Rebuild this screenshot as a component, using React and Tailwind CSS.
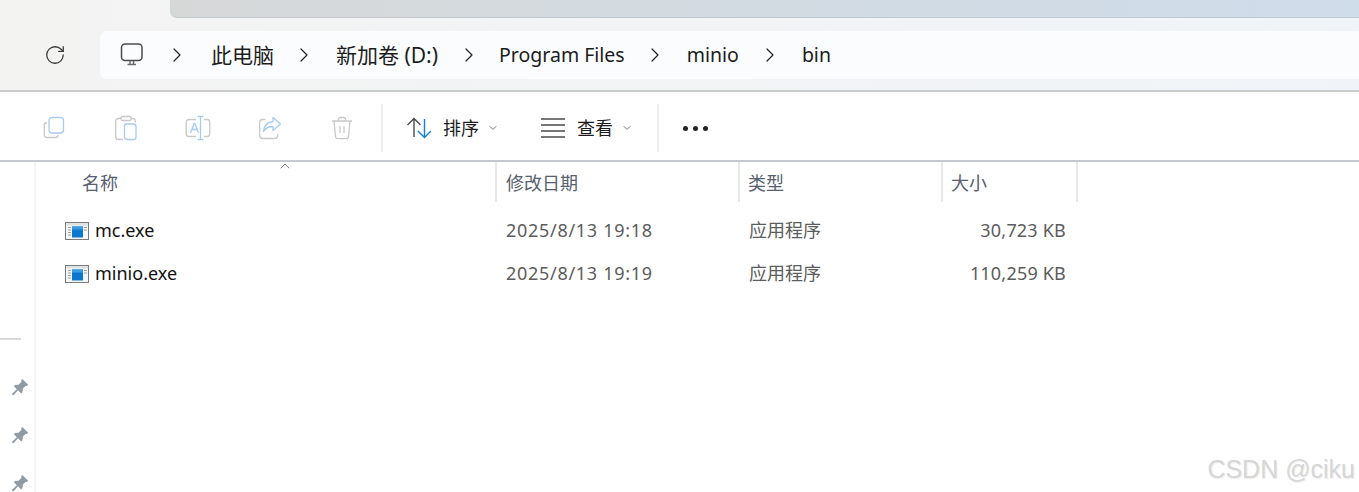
import React from 'react';
import { RotateCw, ChevronRight, ChevronDown, ChevronUp } from 'lucide-react';

const FONT = "font-['Noto_Sans','Noto_Sans_CJK_SC',sans-serif]";

const MonitorIcon = () => (
  <svg width="24" height="24" viewBox="0 0 24 24" fill="none" stroke="#4a4a4a" strokeWidth="1.5">
    <rect x="1.5" y="1" width="20.5" height="16.5" rx="3.5" />
    <path d="M7.5 21.5h8.5M10 18v3M13.5 18v3" stroke="#6b6b6b" />
  </svg>
);

const CopyIcon = () => (
  <svg width="24" height="24" viewBox="0 0 24 24" fill="none" strokeWidth="1.3">
    <path d="M5 6.5c-1.6.3-2.7 1.3-2.7 3v8.700c0 2 1.300 3.300 3.300 3.300h7.700c1.800 0 2.800-1 3.100-2.500" stroke="#c9c9c9" />
    <rect x="7" y="1.500" width="14.500" height="15.500" rx="3" stroke="#a5cdf0" />
  </svg>
);

const PasteIcon = () => (
  <svg width="24" height="26" viewBox="0 0 24 26" fill="none" strokeWidth="1.3">
    <path d="M7 3.500H4.500C2.800 3.500 1.700 4.600 1.700 6.300v15.400c0 1.700 1.100 2.800 2.800 2.800H9M17 3.500h1.500c1.700 0 2.800 1.100 2.800 2.800V7.500" stroke="#c9c9c9" />
    <rect x="7" y="1.500" width="10" height="4" rx="1.500" stroke="#c9c9c9" />
    <rect x="10.500" y="9" width="11.500" height="15.500" rx="2.500" stroke="#a5cdf0" />
  </svg>
);

const RenameIcon = () => (
  <svg width="26" height="26" viewBox="0 0 26 26" fill="none" strokeWidth="1.3">
    <path d="M11 4.500H4C2.300 4.500 1.200 5.600 1.200 7.300v11.400c0 1.700 1.100 2.800 2.800 2.800h7M19 4.500h3c1.700 0 2.800 1.100 2.800 2.800v11.400c0 1.700-1.100 2.800-2.800 2.800h-3" stroke="#c9c9c9" />
    <path d="M5.500 18l3.700-9.500h.6l3.700 9.500M7 14.500h5.500M12.500 1.500h6M12.500 24.500h6M15.500 1.500v23" stroke="#a5cdf0" />
  </svg>
);

const ShareIcon = () => (
  <svg width="24" height="24" viewBox="0 0 24 24" fill="none" strokeWidth="1.3">
    <path d="M7.500 3.500H4.700C2.900 3.500 1.700 4.700 1.700 6.500v13c0 1.800 1.200 3 3 3h12c1.800 0 3-1.200 3-3v-1.500" stroke="#c9c9c9" />
    <path d="M15 1.500l7.500 6.500-7.500 6.500v-4C10.500 10.500 7.500 12 5.500 15.500c.5-5.500 3.500-9.300 9.500-10z" stroke="#a5cdf0" strokeLinejoin="round" />
  </svg>
);

const TrashIcon = () => (
  <svg width="22" height="24" viewBox="0 0 22 24" fill="none" stroke="#c9c9c9" strokeWidth="1.3">
    <path d="M1 5h20M7.500 5V3.500C7.500 2.300 8.300 1.500 9.500 1.500h3c1.200 0 2 .8 2 2V5M3 5l1.500 15.500c.1 1.300 1 2.200 2.300 2.200h8.400c1.300 0 2.200-.9 2.300-2.200L19 5M9 10v7M13 10v7" />
  </svg>
);

const SortIcon = () => (
  <svg width="26" height="22" viewBox="0 0 26 22" fill="none" strokeWidth="1.400">
    <path d="M1.500 8L8 1.500 14.500 8M8 1.500V20" stroke="#4a4a4a" />
    <path d="M12 14l6.500 6.500L25 14M18.500 20.500V2" stroke="#0f7fd6" />
  </svg>
);

const PinIcon = () => (
  <svg width="18" height="18" viewBox="0 0 16 16" fill="#8f9ba3">
    <path d="M9.800.7l5.500 5.200-1.400 1.100-1 .1-2.500 2.500-.2 3-1.200 1.100-2.700-2.800L2 15.500.7 14.300l4.500-4.300L2.500 7.300l1.100-1.100 3.100-.2 2.400-2.500.1-1.100z" />
  </svg>
);

const ExeIcon = () => (
  <svg width="24" height="18" viewBox="0 0 24 18" className="shrink-0">
    <rect x="0.500" y="0.500" width="23" height="17" fill="#f4f6f8" stroke="#7b7b7b" />
    <rect x="1" y="1" width="22" height="2.500" fill="#dfe3e6" />
    <path d="M3 5.500h3M3 8h3M3 10.500h3M3 13h3M19 5.500h3M19 8h3" stroke="#9aa2a8" />
    <rect x="7" y="4.500" width="11" height="11" fill="#0a78cf" />
    <rect x="7" y="4.500" width="11" height="3" fill="#3a9be3" />
  </svg>
);

const Crumb = ({ label, className }) => (
  <span className={`leading-[28px] text-[#1c1c1c] whitespace-nowrap ${className}`}>{label}</span>
);

const Sep = ({ right }) => <ChevronRight size={24} strokeWidth={1.200} className={`text-[#222] shrink-0 ${right}`} />;

const ToolBtn = ({ children, w }) => (
  <div className={`flex items-center justify-center ${w}`}>{children}</div>
);

const files = [
  { name: 'mc.exe', date: '2025/8/13 19:18', type: '应用程序', size: '30,723 KB' },
  { name: 'minio.exe', date: '2025/8/13 19:19', type: '应用程序', size: '110,259 KB' },
];

const Header = ({ label, className }) => (
  <div className={`h-[40px] pt-[2px] flex items-center border-r-2 border-[#e6e8ea] text-[18px] text-[#56606e] ${className}`}>{label}</div>
);

export default function App() {
  return (
    <div className={`w-[1359px] h-[492px] overflow-hidden bg-white flex flex-col relative ${FONT}`}>
      {/* title strip and address bar */}
      <div className="h-[92px] shrink-0 bg-gradient-to-r from-[#f3f3f2] to-[#f0f4f8] border-b-2 border-[#c9ccca]">
        <div className="h-[18px] ml-[170px] bg-gradient-to-r from-[#d6d8d8] via-[#d2dbe2] to-[#cfdcea] rounded-bl-[7px] border-b border-[#c4c8ca]" />
        <div className="mt-[13px] flex items-center">
          <div className="w-[100px] shrink-0 flex justify-center pl-[10px]">
            <RotateCw size={22} strokeWidth={1.400} className="text-[#3a3a3a]" />
          </div>
          <div className="flex-1 h-[48px] bg-[#fbfcfd] rounded-l-[7px] flex items-center pl-[20px]">
            <span className="mr-[21px] flex"><MonitorIcon /></span>
            <Sep right="mr-[22px]" />
            <Crumb label="此电脑" className="text-[21px] mr-[18px]" />
            <Sep right="mr-[20px]" />
            <Crumb label="新加卷 (D:)" className="text-[21px] mr-[19px]" />
            <Sep right="mr-[18px]" />
            <Crumb label="Program Files" className="text-[19.5px] mr-[18px]" />
            <Sep right="mr-[20px]" />
            <Crumb label="minio" className="text-[19.5px] mr-[19px]" />
            <Sep right="mr-[20px]" />
            <Crumb label="bin" className="text-[19.5px]" />
          </div>
        </div>
      </div>

      {/* command bar */}
      <div className="h-[70px] shrink-0 bg-white border-b-2 border-[#c5c9cd] flex items-center pt-[4px]">
        <div className="flex items-center pl-[18px] w-[383px] shrink-0 h-[48px] border-r-2 border-[#eeeeee]">
          <ToolBtn w="w-[72px]"><CopyIcon /></ToolBtn>
          <ToolBtn w="w-[72px]"><PasteIcon /></ToolBtn>
          <ToolBtn w="w-[72px]"><RenameIcon /></ToolBtn>
          <ToolBtn w="w-[72px]"><ShareIcon /></ToolBtn>
          <ToolBtn w="w-[72px]"><TrashIcon /></ToolBtn>
        </div>
        <div className="flex items-center w-[276px] shrink-0 h-[48px] border-r-2 border-[#eeeeee] pl-[23px]">
          <SortIcon />
          <span className="ml-[11px] text-[18px] text-[#1c1c1c]">排序</span>
          <ChevronDown size={12} className="ml-[8px] text-[#777]" />
          <div className="ml-[42px] w-[24px] flex flex-col gap-[4px]">
            <div className="h-[2px] bg-[#777]" />
            <div className="h-[2px] bg-[#777]" />
            <div className="h-[2px] bg-[#777]" />
            <div className="h-[2px] bg-[#777]" />
          </div>
          <span className="ml-[12px] text-[18px] text-[#1c1c1c]">查看</span>
          <ChevronDown size={12} className="ml-[8px] text-[#777]" />
        </div>
        <div className="ml-[24px] flex gap-[5px]">
          <div className="w-[5px] h-[5px] rounded-full bg-[#222]" />
          <div className="w-[5px] h-[5px] rounded-full bg-[#222]" />
          <div className="w-[5px] h-[5px] rounded-full bg-[#222]" />
        </div>
      </div>

      {/* body */}
      <div className="flex-1 flex min-h-0">
        <div className="w-[36px] shrink-0 border-r-2 border-[#f4f4f4] flex flex-col pt-[176px]">
          <div className="w-[21px] h-[2px] bg-[#d9d9d9]" />
          <div className="mt-[38px] ml-[11px] flex flex-col gap-[30px]">
            <PinIcon />
            <PinIcon />
            <PinIcon />
          </div>
        </div>
        <div className="flex-1 min-w-0">
          <div className="flex relative">
            <Header label="名称" className="w-[461px] pl-[46px]" />
            <Header label="修改日期" className="w-[243px] pl-[9px]" />
            <Header label="类型" className="w-[203px] pl-[8px]" />
            <Header label="大小" className="w-[135px] pl-[8px]" />
            <ChevronUp size={16} strokeWidth={1.200} className="absolute left-[241px] top-[-4px] text-[#666]" />
          </div>
          <div className="mt-[7px] flex flex-col">
            {files.map((f) => (
              <div key={f.name} className="h-[43px] flex items-center text-[18px]">
                <div className="w-[461px] pl-[29px] flex items-center gap-[6px] text-[#111]">
                  <ExeIcon />
                  <span>{f.name}</span>
                </div>
                <div className="w-[243px] pl-[9px] text-[#5c5c5c] tracking-[0.7px] whitespace-nowrap">{f.date}</div>
                <div className="w-[203px] pl-[9px] text-[#5c5c5c]">{f.type}</div>
                <div className="w-[135px] pr-[12px] text-right text-[#5c5c5c] tracking-[0.2px]">{f.size}</div>
              </div>
            ))}
          </div>
        </div>
      </div>

      {/* watermark */}
      <div className="absolute right-[4px] bottom-[9px] font-['Liberation_Sans',sans-serif] text-[25px] leading-[28px] text-[#d6d6d6] whitespace-nowrap [text-shadow:1px_1px_1px_#ececec]">
        CSDN @ciku
      </div>
    </div>
  );
}
